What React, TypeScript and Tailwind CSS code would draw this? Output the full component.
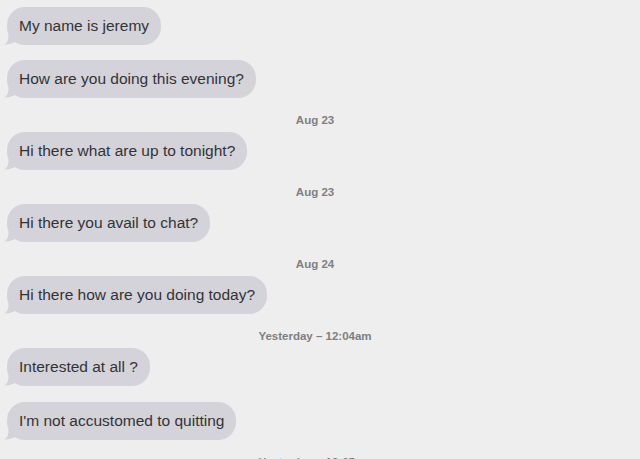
import React from "react";

function Bubble({ text }: { text: string }) {
  return (
    <div className="relative self-start shrink-0">
      <svg className="absolute left-[-5px] bottom-[0px]" width="16" height="14" viewBox="0 0 16 14">
        <path d="M14 0 L14 10 C12 12 8 13.5 2 13.5 C5 12 6.5 10 6.5 4 Z" fill="#d3d3d9" />
      </svg>
      <div className="relative h-[38px] rounded-[18px] bg-[#d3d3d9] pl-[12px] pr-[12px] flex items-center text-[15.5px] text-[#333336]">
        {text}
      </div>
    </div>
  );
}

function Stamp({ text }: { text: string }) {
  return (
    <div className="shrink-0 w-[616px] text-center pt-[15px] pb-[5px] leading-[14px] text-[11.5px] font-bold text-[#7e7e82]">
      {text}
    </div>
  );
}

export default function App() {
  return (
    <div
      className="w-[640px] h-[459px] overflow-hidden bg-[#eeeeef] flex flex-col pl-[7px] pt-[7px]"
      style={{ fontFamily: '"Liberation Sans", Arial, sans-serif' }}
    >
      <Bubble text="My name is jeremy" />
      <div className="h-[15px] shrink-0" />
      <Bubble text="How are you doing this evening?" />
      <Stamp text="Aug 23" />
      <Bubble text="Hi there what are up to tonight?" />
      <Stamp text="Aug 23" />
      <Bubble text="Hi there you avail to chat?" />
      <Stamp text="Aug 24" />
      <Bubble text="Hi there how are you doing today?" />
      <Stamp text="Yesterday – 12:04am" />
      <Bubble text="Interested at all ?" />
      <div className="h-[16px] shrink-0" />
      <Bubble text="I'm not accustomed to quitting" />
      <Stamp text="Yesterday – 12:05am" />
    </div>
  );
}
